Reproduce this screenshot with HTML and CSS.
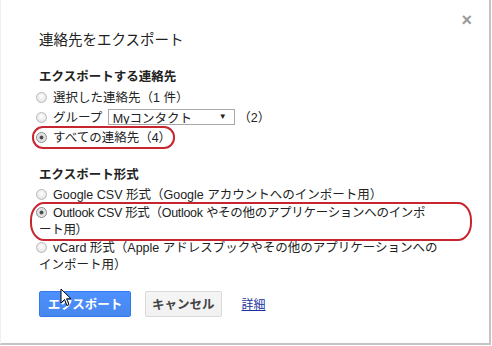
FILE: index.html
```html
<!doctype html>
<html>
<head>
  <meta charset="utf-8">
  <link rel="stylesheet" href="styles.css">
</head>
<body>
  <div class="dialog">
    <span class="close">&#215;</span>
    <h2 class="title">連絡先をエクスポート</h2>

    <h3 class="section">エクスポートする連絡先</h3>
    <div class="row"><span class="radio"></span>選択した連絡先（1 件）</div>
    <div class="row"><span class="radio"></span>グループ <span class="select">Myコンタクト<span class="arrow">&#9660;</span></span> （2）</div>
    <div class="row"><span class="radio on"></span>すべての連絡先（4）</div>

    <h3 class="section second">エクスポート形式</h3>
    <div class="fmt"><span class="radio"></span>Google CSV 形式（Google アカウントへのインポート用）</div>
    <div class="fmt tight"><span class="radio on"></span>Outlook CSV 形式（Outlook やその他のアプリケーションへのインポ<br>ート用）</div>
    <div class="fmt"><span class="radio"></span>vCard 形式（Apple アドレスブックやその他のアプリケーションへの<br>インポート用）</div>

    <div class="buttons">
      <button class="btn primary">エクスポート</button>
      <button class="btn">キャンセル</button>
      <a href="#" class="more">詳細</a>
    </div>

    <div class="mark mark-all"></div>
    <div class="mark mark-outlook"></div>
    <svg class="cursor" width="12" height="19" viewBox="0 0 12 19">
      <path d="M1 1 L1 15 L4.5 11.5 L7 17.5 L9 16.6 L6.6 10.8 L11 10.8 Z" fill="#fff" stroke="#000" stroke-width="1"/>
    </svg>
  </div>
</body>
</html>
```

FILE: styles.css
```css
body{
  margin:0;
  background-color: #ffffff;
  font-family: "Liberation Sans", "Noto Sans CJK JP", sans-serif;
  color: #222222;
}
.dialog{
  position: relative;
  width: 450px;
  height: 313px;
  padding: 30px 0 0 38px;
  background: #ffffff;
  border-right: 2px solid #c4c4c4;
  border-bottom: 2px solid #c4c4c4;
  border-left: 1px solid #f0f0f0;
}
.close{
  position: absolute;
  top: 10px;
  right: 17px;
  font-size: 18px;
  font-weight: bold;
  color: #9a9a9a;
}
.title{
  margin: 0;
  font-size: 14.5px;
  font-weight: normal;
  line-height: 20px;
}
.section{
  margin: 18px 0 2px;
  font-size: 12.5px;
  font-weight: bold;
  line-height: 18px;
}
.section.second{
  margin: 18px 0 3px;
}
.row{
  font-size: 12.5px;
  line-height: 20px;
  height: 20px;
  white-space: nowrap;
}
.fmt{
  font-size: 12.5px;
  line-height: 17.5px;
  white-space: nowrap;
}
.fmt.tight{
  letter-spacing: -0.3px;
}
.radio{
  display: inline-block;
  width: 11px;
  height: 11px;
  margin: 0 6px 0 -3px;
  border: 1px solid #b9b9b9;
  border-radius: 50%;
  background: radial-gradient(circle at 50% 40%, #ffffff 0%, #e6e6e6 70%, #d4d4d4 100%);
  vertical-align: -1px;
  box-sizing: border-box;
}
.radio.on{
  background: radial-gradient(circle, #444444 0%, #555555 26%, #dcdcdc 36%, #f0f0f0 100%);
  border-color: #8a8a8a;
}
.select{
  display: inline-block;
  position: relative;
  width: 127px;
  height: 16px;
  line-height: 18px;
  margin-left: 2px;
  padding-left: 4px;
  border: 1px solid #a8a8a8;
  box-sizing: border-box;
  overflow: hidden;
  vertical-align: -3px;
}
.arrow{
  position: absolute;
  right: 7px;
  top: -2px;
  font-size: 8px;
}
.buttons{
  display: flex;
  align-items: center;
  gap: 14px;
  margin-top: 16px;
}
.btn{
  height: 26px;
  padding: 0 6px;
  font-family: "Liberation Sans", "Noto Sans CJK JP", sans-serif;
  font-size: 12.5px;
  font-weight: bold;
  color: #444444;
  background: linear-gradient(#f5f5f5, #f1f1f1);
  border: 1px solid #d9d9d9;
  border-radius: 2px;
}
.btn.primary{
  width: 92px;
  padding: 0;
  color: #ffffff;
  background: linear-gradient(#4d90fe, #4787ed);
  border-color: #3079ed;
}
.more{
  margin-left: 6px;
  font-size: 12px;
  color: #1a35a0;
  text-decoration: underline;
}
.mark{
  position: absolute;
  border: 2px solid #c8262e;
  box-sizing: border-box;
}
.mark-all{
  left: 31px;
  top: 126px;
  width: 143px;
  height: 23px;
  border-radius: 11px;
}
.mark-outlook{
  left: 29px;
  top: 202px;
  width: 442px;
  height: 39px;
  border-radius: 14px / 18px;
}
.cursor{
  position: absolute;
  left: 59px;
  top: 288px;
}
```
